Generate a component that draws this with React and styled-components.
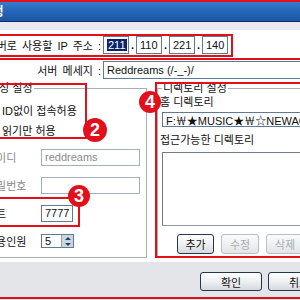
import styled, { createGlobalStyle } from "styled-components";

const GlobalStyle = createGlobalStyle`
  html, body {
    margin: 0;
    padding: 0;
    width: 300px;
    height: 300px;
    overflow: hidden;
    background: #fff;
  }
  body {
    font-family: "Liberation Sans", "Noto Sans CJK KR", sans-serif;
    font-size: 11px;
    color: #111;
  }
`;

const Frame = styled.div`
  position: relative;
  width: 420px;
  height: 300px;
  margin-left: -60px;
  display: flex;
  flex-direction: column;
  background: #fff;
`;

const TitleBar = styled.div`
  height: 21px;
  display: flex;
  align-items: center;
  padding-left: 16px;
  background: linear-gradient(#3b80d2, #2669bb 45%, #1b57a5);
  border-bottom: 1px solid #0b2b6b;
  color: #fff;
  font-weight: bold;
  font-size: 12px;
`;

const Strip = styled.div`
  height: 8px;
  background: #e8e8ee;
`;

const Body = styled.div`
  flex: 1;
  padding-top: 6px;
  background: #fff;
`;

const FieldRow = styled.div`
  display: flex;
  align-items: center;
  height: 18px;
  margin-top: ${p => p.$gap || 0}px;
`;

const Label = styled.div`
  width: 163px;
  flex: none;
  display: flex;
  justify-content: flex-end;
  padding-right: 2px;
  box-sizing: border-box;
  white-space: nowrap;
  word-spacing: 2px;
`;

const Field = styled.div`
  box-sizing: border-box;
  width: ${p => p.$w ? `${p.$w}px` : "auto"};
  height: ${p => p.$h || 18}px;
  flex: ${p => p.$w ? "none" : 1};
  display: flex;
  align-items: center;
  padding: 0 3px;
  background: #fff;
  border: 1px solid ${p => p.$disabled ? "#9fb0c0" : "#5f7a92"};
  color: ${p => p.$disabled ? "#8a8a8a" : "#111"};
  white-space: nowrap;
  overflow: hidden;
`;

const IpBox = styled.div`
  display: flex;
  align-items: center;
`;

const Dot = styled.span`
  width: 7px;
  text-align: center;
  font-weight: bold;
`;

const Selected = styled.span`
  background: #0a246a;
  color: #fff;
  padding: 0 1px;
`;

const Groups = styled.div`
  display: grid;
  grid-template-columns: 164px 155px;
  column-gap: 10px;
  padding-left: 43px;
  margin-top: 2px;
`;

const Group = styled.fieldset`
  margin: 0;
  padding: 0 2px 2px;
  min-width: 0;
  border: 1px solid #a9aeb5;
  display: flex;
  flex-direction: column;
`;

const Legend = styled.legend`
  padding: 0 1px;
  margin-left: 2px;
  line-height: 14px;
  font-size: 11px;
`;

const CheckRow = styled.label`
  height: 20px;
  display: flex;
  align-items: center;
  gap: 3px;
  white-space: nowrap;
  &:first-of-type {
    margin-top: 5px;
  }
`;

const Box = styled.span`
  width: 11px;
  height: 11px;
  border: 1px solid #1c5180;
  background: #fff;
  flex: none;
`;

const FormRow = styled.div`
  height: 28px;
  display: grid;
  grid-template-columns: 55px auto;
  align-items: center;
  margin-top: ${p => p.$gap || 0}px;
  color: ${p => p.$disabled ? "#8a8a8a" : "#111"};
  white-space: nowrap;
`;

const Spin = styled.div`
  box-sizing: border-box;
  width: 33px;
  height: 14px;
  display: flex;
  align-items: center;
  justify-content: space-between;
  padding-left: 3px;
  border: 1px solid #5f7a92;
  background: #fff;
  font-size: 11px;
`;

const SpinButtons = styled.div`
  width: 11px;
  height: 12px;
  display: flex;
  flex-direction: column;
  background: #c9d6e4;
  border-left: 1px solid #8ea3b8;
`;

const Arrow = styled.span`
  flex: 1;
  display: flex;
  align-items: center;
  justify-content: center;
  &::after {
    content: "";
    border-left: 3px solid transparent;
    border-right: 3px solid transparent;
    ${p => p.$down ? "border-top: 3px solid #2b4058;" : "border-bottom: 3px solid #2b4058;"}
  }
`;

const SmallLabel = styled.div`
  line-height: 14px;
  white-space: nowrap;
  margin-top: ${p => p.$gap || 0}px;
`;

const Indent = styled.div`
  margin-left: 2px;
  margin-top: ${p => p.$gap || 0}px;
  display: flex;
`;

const ListBox = styled.div`
  height: 72px;
  flex: 1;
  background: #fff;
  border: 1px solid #8e9aa6;
  border-top-color: #6f7c89;
  border-left-color: #6f7c89;
`;

const ButtonRow = styled.div`
  display: flex;
  gap: 7px;
  margin: 8px 0 0 17px;
`;

const Button = styled.button`
  box-sizing: border-box;
  width: ${p => p.$w}px;
  height: ${p => p.$h || 20}px;
  padding: 0;
  font-family: inherit;
  font-size: 11px;
  border-radius: 3px;
  border: 1px solid ${p => p.disabled ? "#babfc5" : "#22384f"};
  color: ${p => p.disabled ? "#a7abb0" : "#111"};
  background: ${p => p.disabled
    ? "linear-gradient(#fbfbfb, #eceef0 60%, #e2e4e7)"
    : "linear-gradient(#ffffff, #eceef1 55%, #d5d9de)"};
`;

const Footer = styled.div`
  height: 38px;
  display: flex;
  justify-content: flex-end;
  gap: 6px;
  padding: 10px 30px 0 0;
  box-sizing: border-box;
  background: #e4e5e9;
`;

const Mark = styled.div`
  position: absolute;
  box-sizing: border-box;
  left: ${p => p.$x}px;
  top: ${p => p.$y}px;
  width: ${p => p.$w}px;
  height: ${p => p.$h}px;
  border: 2px solid #e3101c;
  pointer-events: none;
`;

const Badge = styled.div`
  position: absolute;
  left: ${p => p.$x}px;
  top: ${p => p.$y}px;
  width: ${p => p.$s}px;
  height: ${p => p.$s}px;
  border-radius: 50%;
  background: #e3101c;
  color: #fff;
  display: flex;
  align-items: center;
  justify-content: center;
  font-family: "Liberation Sans", sans-serif;
  font-weight: bold;
  font-size: 18px;
  z-index: 2;
`;

const ip = ["211", "110", "221", "140"];

export default function App() {
  return (
    <>
      <GlobalStyle />
      <Frame>
        <TitleBar>서버 설정</TitleBar>
        <Strip />
        <Body>
          <FieldRow>
            <Label>서버로 사용할 IP 주소 :</Label>
            <IpBox>
              {ip.map((part, i) => (
                <IpBox key={i}>
                  {i > 0 && <Dot>.</Dot>}
                  <Field $w={26}>{i === 0 ? <Selected>{part}</Selected> : part}</Field>
                </IpBox>
              ))}
            </IpBox>
          </FieldRow>
          <FieldRow $gap={7}>
            <Label>서버 메세지 :</Label>
            <Field>Reddreams (/-_-)/</Field>
          </FieldRow>

          <Groups>
            <Group>
              <Legend>속성 설정</Legend>
              <CheckRow><Box />ID없이 접속허용</CheckRow>
              <CheckRow><Box />읽기만 허용</CheckRow>
              <FormRow $gap={3} $disabled>
                아이디
                <Field $w={99} $h={17} $disabled>reddreams</Field>
              </FormRow>
              <FormRow $disabled>
                비밀번호
                <Field $w={99} $h={17} $disabled />
              </FormRow>
              <FormRow>
                포트
                <Field $w={32} $h={17}>7777</Field>
              </FormRow>
              <FormRow>
                허용인원
                <Spin>
                  5
                  <SpinButtons>
                    <Arrow />
                    <Arrow $down />
                  </SpinButtons>
                </Spin>
              </FormRow>
            </Group>

            <Group>
              <Legend>디렉토리 설정</Legend>
              <SmallLabel>홈 디렉토리</SmallLabel>
              <Indent $gap={3}>
                <Field $h={15}>F:￦★MUSIC★￦☆NEWAGE</Field>
              </Indent>
              <SmallLabel $gap={6}>접근가능한 디렉토리</SmallLabel>
              <Indent $gap={5}>
                <ListBox />
              </Indent>
              <ButtonRow>
                <Button $w={37}>추가</Button>
                <Button $w={38} disabled>수정</Button>
                <Button $w={38} disabled>삭제</Button>
              </ButtonRow>
            </Group>
          </Groups>
        </Body>
        <Footer>
          <Button $w={62} $h={19}>확인</Button>
          <Button $w={62} $h={19}>취소</Button>
        </Footer>

        <Mark $x={-20} $y={0} $w={480} $h={60} />
        <Mark $x={55} $y={34} $w={238} $h={23} />
        <Mark $x={55} $y={83} $w={92} $h={56} />
        <Mark $x={55} $y={197} $w={85} $h={30} />
        <Mark $x={215} $y={82} $w={200} $h={176} />
        <Mark $x={-20} $y={297} $w={480} $h={40} />

        <Badge $x={143} $y={118} $s={24}>2</Badge>
        <Badge $x={128} $y={185} $s={22}>3</Badge>
        <Badge $x={199} $y={91} $s={22}>4</Badge>
      </Frame>
    </>
  );
}
